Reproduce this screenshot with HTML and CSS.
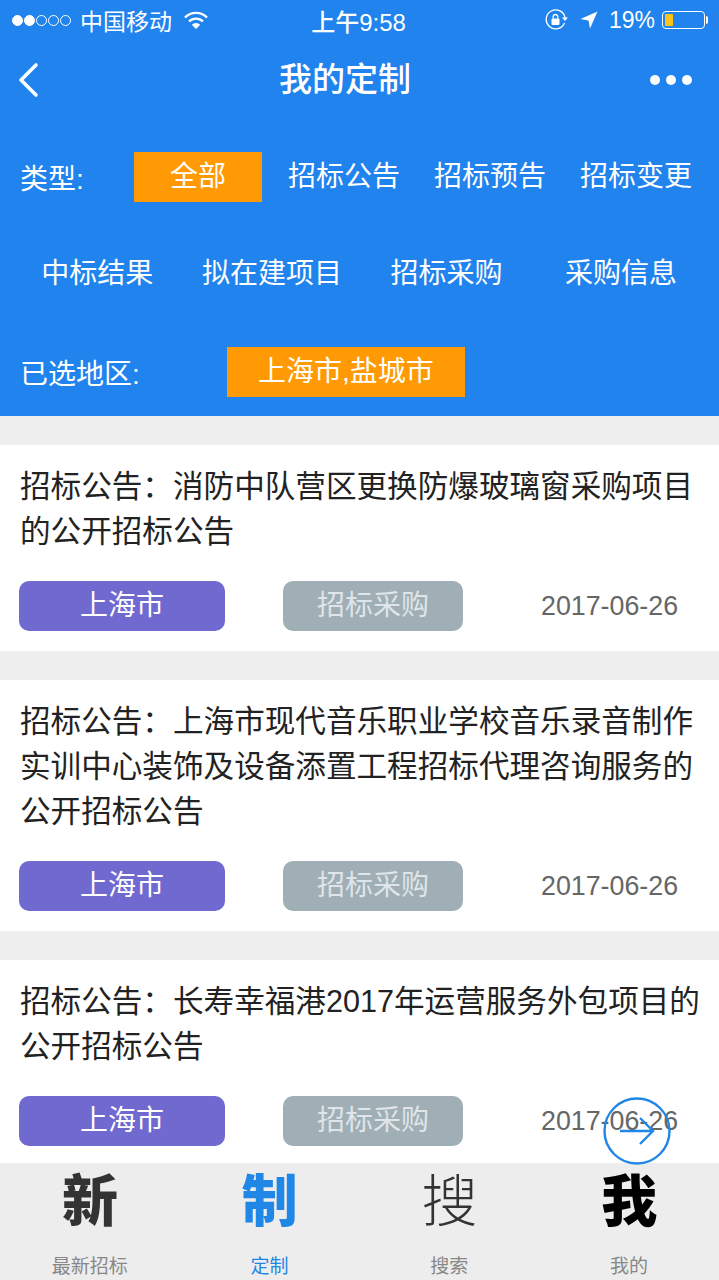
FILE: index.html
```html
<!DOCTYPE html>
<html lang="zh-CN">
<head>
  <meta charset="UTF-8" />
  <meta name="viewport" content="width=device-width, initial-scale=1.0"/>
  <title>我的定制</title>
  <link rel="stylesheet" href="styles.css">
</head>
<body>
  <div class="page">
    <div class="top">
      <div class="status">
        <div class="status-left">
          <span class="dots"><i class="on"></i><i class="on"></i><i></i><i></i><i></i></span>
          <span class="carrier">中国移动</span>
          <svg class="wifi" width="24" height="18" viewBox="0 0 24 18">
            <path d="M1 6.5a15.5 15.5 0 0 1 22 0" fill="none" stroke="#fff" stroke-width="2.4"/>
            <path d="M5 10.5a10 10 0 0 1 14 0" fill="none" stroke="#fff" stroke-width="2.4"/>
            <path d="M12 18l-4.200-4.200a6 6 0 0 1 8.400 0z" fill="#fff"/>
          </svg>
        </div>
        <div class="status-time">上午9:58</div>
        <div class="status-right">
          <svg width="23" height="22" viewBox="0 0 23 22">
            <path d="M19.500 14a9.500 9.500 0 1 1 .6-5" fill="none" stroke="#fff" stroke-width="1.300"/>
            <path d="M17 8.500h6l-3 3.500z" fill="#fff"/>
            <rect x="6.500" y="9.500" width="8" height="6.500" rx="1" fill="#fff"/>
            <path d="M8.200 9.500V7.800a2.300 2.300 0 0 1 4.600 0v1.700" fill="none" stroke="#fff" stroke-width="1.300"/>
          </svg>
          <svg class="locate" width="18" height="18" viewBox="0 0 18 18">
            <path d="M17.500 .5L10 17.500 8.500 9.500 .5 8z" fill="#fff"/>
          </svg>
          <span class="percent">19%</span>
          <span class="battery"><i></i></span>
        </div>
      </div>

      <div class="nav">
        <svg class="back" width="24" height="36" viewBox="0 0 24 36">
          <path d="M20 3L5 18l15 15" fill="none" stroke="#fff" stroke-width="3.600" stroke-linecap="round" stroke-linejoin="round"/>
        </svg>
        <h1>我的定制</h1>
        <span class="more"><i></i><i></i><i></i></span>
      </div>

      <div class="filter first">
        <span class="filter-label">类型:</span>
        <span class="opt active">全部</span>
        <span class="opt">招标公告</span>
        <span class="opt">招标预告</span>
        <span class="opt">招标变更</span>
      </div>
      <div class="filter second">
        <span class="opt">中标结果</span>
        <span class="opt">拟在建项目</span>
        <span class="opt">招标采购</span>
        <span class="opt">采购信息</span>
      </div>
      <div class="filter third">
        <span class="filter-label">已选地区:</span>
        <span class="area">上海市,盐城市</span>
      </div>
    </div>

    <div class="list">
      <div class="card">
        <p class="title">招标公告：消防中队营区更换防爆玻璃窗采购项目的公开招标公告</p>
        <div class="meta">
          <span class="tag city">上海市</span>
          <span class="tag kind">招标采购</span>
          <span class="date">2017-06-26</span>
        </div>
      </div>
      <div class="card">
        <p class="title">招标公告：上海市现代音乐职业学校音乐录音制作实训中心装饰及设备添置工程招标代理咨询服务的公开招标公告</p>
        <div class="meta">
          <span class="tag city">上海市</span>
          <span class="tag kind">招标采购</span>
          <span class="date">2017-06-26</span>
        </div>
      </div>
      <div class="card">
        <p class="title">招标公告：长寿幸福港2017年运营服务外包项目的公开招标公告</p>
        <div class="meta">
          <span class="tag city">上海市</span>
          <span class="tag kind">招标采购</span>
          <span class="date">2017-06-26</span>
        </div>
      </div>
    </div>

    <svg class="float-btn" width="68" height="68" viewBox="0 0 68 68">
      <circle cx="34" cy="34" r="32.500" fill="none" stroke="#2087e6" stroke-width="2.400"/>
      <path d="M17 34h32M37 21l13 13-13 13" fill="none" stroke="#2087e6" stroke-width="2.400"/>
    </svg>

    <div class="tabs">
      <div class="tab"><span class="glyph heavy">新</span><span class="tab-name">最新招标</span></div>
      <div class="tab current"><span class="glyph heavy">制</span><span class="tab-name">定制</span></div>
      <div class="tab"><span class="glyph thin">搜</span><span class="tab-name">搜索</span></div>
      <div class="tab"><span class="glyph black">我</span><span class="tab-name">我的</span></div>
    </div>
  </div>
</body>
</html>
```

FILE: styles.css
```css
body {
  margin: 0;
  font-family: "Liberation Sans", "Noto Sans CJK SC", sans-serif;
}
p, h1 {
  margin: 0;
}
.page {
  position: relative;
  display: flex;
  flex-direction: column;
  height: 1280px;
  overflow: hidden;
  background: #eeeeee;
}
.top {
  flex: none;
  height: 416px;
  background: #2083ee;
  color: #fff;
}

/* status bar */
.status {
  display: flex;
  align-items: center;
  justify-content: space-between;
  height: 40px;
  padding: 0 14px 0 12px;
}
.status-left, .status-right {
  display: flex;
  align-items: center;
  width: 250px;
}
.status-right {
  justify-content: flex-end;
}
.dots {
  display: flex;
  gap: 1px;
  margin-right: 9px;
}
.dots i {
  width: 11px;
  height: 11px;
  box-sizing: border-box;
  border: 1px solid #fff;
  border-radius: 50%;
}
.dots i.on {
  background: #fff;
}
.carrier {
  font-size: 23px;
}
.wifi {
  margin-left: 12px;
}
.status-time {
  font-size: 24px;
  font-weight: 500;
}
.locate {
  margin-left: 12px;
}
.percent {
  margin-left: 11px;
  font-size: 23px;
}
.battery {
  position: relative;
  display: block;
  width: 43px;
  height: 18px;
  margin-left: 7px;
  box-sizing: border-box;
  border: 1px solid #fff;
  border-radius: 4px;
  padding: 2px;
}
.battery i {
  display: block;
  width: 8px;
  height: 12px;
  background: #fcc419;
}
.battery::after {
  content: "";
  position: absolute;
  right: -4px;
  top: 4px;
  width: 2px;
  height: 8px;
  background: #fff;
  border-radius: 0 2px 2px 0;
}

/* nav */
.nav {
  display: flex;
  align-items: center;
  justify-content: space-between;
  height: 80px;
  padding: 0 27px 0 16px;
}
.nav h1 {
  font-size: 33px;
  font-weight: 500;
  line-height: 80px;
}
.more {
  display: flex;
  gap: 6px;
}
.more i {
  width: 10px;
  height: 10px;
  border-radius: 50%;
  background: #fff;
}

/* filters */
.filter {
  font-size: 28px;
  align-items: center;
}
.filter-label {
  white-space: nowrap;
}
.opt {
  text-align: center;
  line-height: 50px;
}
.first {
  display: grid;
  grid-template-columns: 105px repeat(4, 146px);
  padding: 32px 0 0 20px;
}
.second {
  display: grid;
  grid-template-columns: repeat(4, 174.6px);
  padding: 47px 0 0 10px;
}
.third {
  display: flex;
  padding: 48px 0 0 20px;
}
.active {
  width: 128px;
  margin-left: 9px;
  background: #ff9a05;
}
.area {
  width: 238px;
  margin-left: 87px;
  line-height: 50px;
  text-align: center;
  background: #ff9a05;
}

/* list */
.list {
  flex: 1;
  min-height: 0;
  overflow: hidden;
  padding-top: 29px;
}
.card {
  margin-bottom: 29px;
  padding: 19px 19px 20px;
  background: #fff;
}
.title {
  padding-left: 1px;
  font-size: 30.6px;
  line-height: 45px;
  color: #222;
}
.meta {
  display: flex;
  align-items: center;
  margin-top: 27px;
}
.tag {
  height: 50px;
  border-radius: 10px;
  font-size: 28px;
  line-height: 50px;
  text-align: center;
  color: #fff;
}
.city {
  width: 206px;
  background: #7069cf;
}
.kind {
  width: 180px;
  margin-left: 58px;
  background: #a0aeb5;
  color: #dfe5e8;
}
.date {
  margin-left: 78px;
  font-size: 26.800px;
  color: #666;
}

/* floating arrow */
.float-btn {
  position: absolute;
  left: 603px;
  top: 1097px;
}

/* tab bar */
.tabs {
  flex: none;
  display: grid;
  grid-template-columns: repeat(4, 1fr);
  height: 117px;
  background: #ededed;
}
.tab {
  display: flex;
  flex-direction: column;
  align-items: center;
  color: #333;
}
.glyph {
  height: 80px;
  font-size: 56px;
  line-height: 78px;
}
.heavy {
  font-weight: 900;
}
.thin {
  font-weight: 300;
}
.black {
  font-weight: 900;
  color: #000;
}
.tab-name {
  margin-top: 12px;
  font-size: 19px;
  line-height: 24px;
  color: #888;
}
.current, .current .tab-name {
  color: #2087e6;
}
```
